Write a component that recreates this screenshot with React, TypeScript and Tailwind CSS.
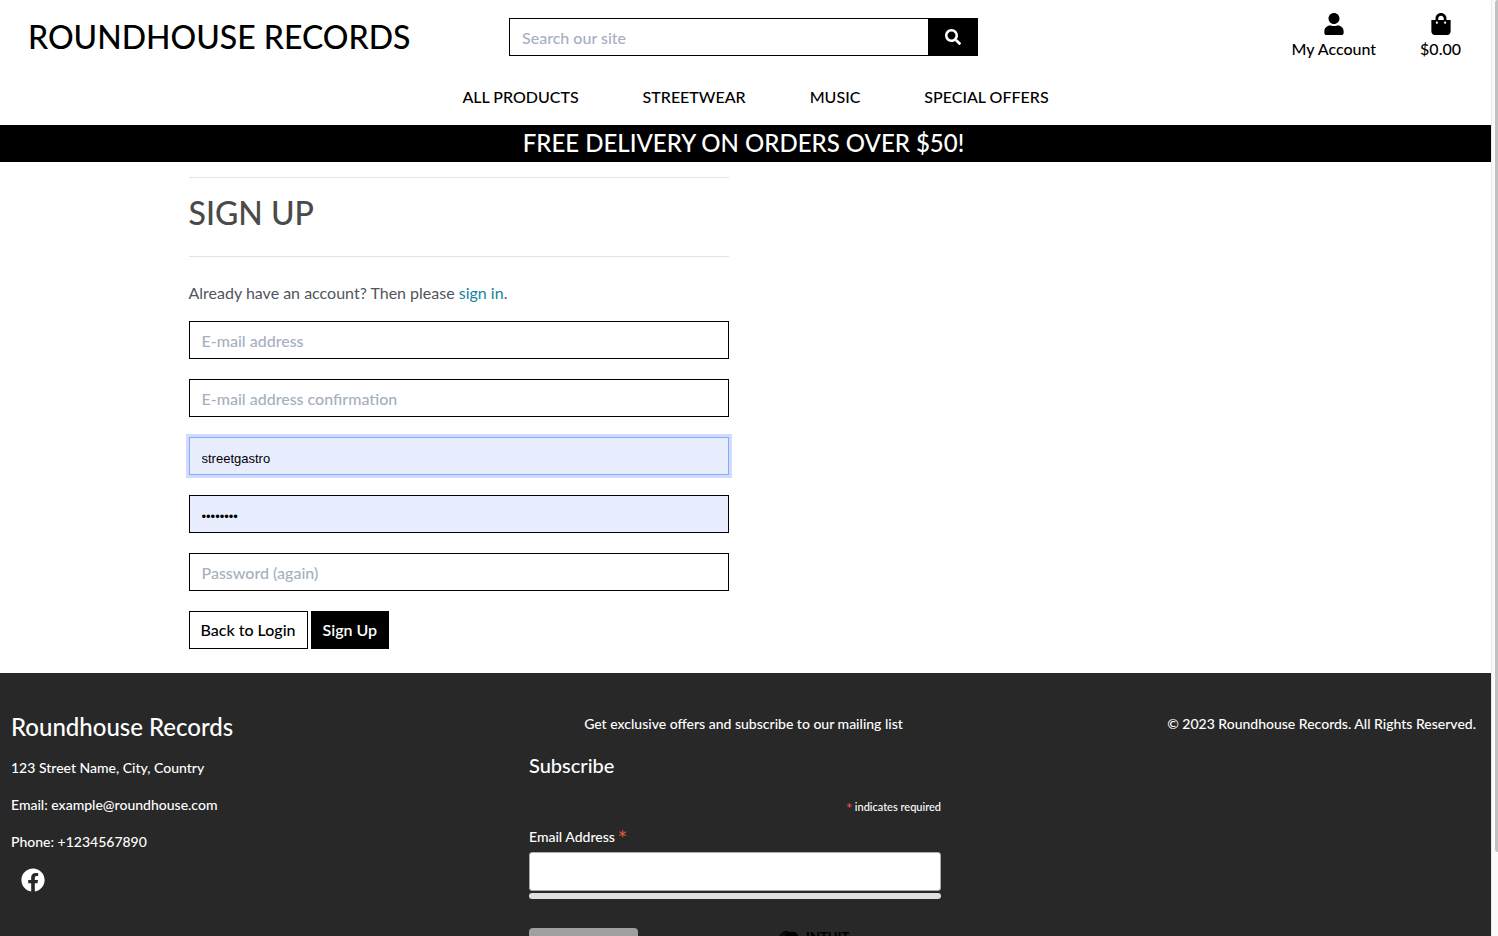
import React from "react";
import { FaFacebook, FaSearch, FaShoppingBag, FaUser } from "react-icons/fa";

const NAV_LINKS = ["ALL PRODUCTS", "STREETWEAR", "MUSIC", "SPECIAL OFFERS"];

const inputBase = "block h-[38px] w-full border px-3 text-base placeholder:text-[#a5b0c0] outline-none";

type FieldProps = {
  id: string;
  label: string;
  type: string;
  value?: string;
  className: string;
};

function Field({ id, label, type, value, className }: FieldProps) {
  return (
    <input
      id={id}
      type={type}
      aria-label={label}
      placeholder={label}
      defaultValue={value}
      className={`${inputBase} ${className}`}
    />
  );
}

function Header() {
  return (
    <header className="text-black">
      <div className="grid h-[75px] grid-cols-3">
        <a href="#home" className="mt-4 pl-7 text-[32px] leading-[42px] whitespace-nowrap">ROUNDHOUSE RECORDS</a>
        <form className="mt-[18px] mr-4 ml-3 flex h-[38px]" onSubmit={(e) => e.preventDefault()}>
          <input
            id="search"
            type="text"
            aria-label="Search our site"
            placeholder="Search our site"
            className="min-w-0 flex-1 border border-black px-3 pt-[2px] text-base outline-none placeholder:text-[#a5b0c0]"
          />
          <button type="submit" aria-label="Search" className="flex w-[49px] items-center bg-black pl-4 text-white">
            <FaSearch size={16} />
          </button>
        </form>
        <div className="flex justify-end gap-11 pt-[13px] pr-[30px]">
          <a href="#account" className="flex flex-col items-center text-base">
            <FaUser size={22} />
            <span className="leading-7">My Account</span>
          </a>
          <a href="#bag" className="flex flex-col items-center text-base">
            <FaShoppingBag size={22} />
            <span className="leading-7">$0.00</span>
          </a>
        </div>
      </div>
      <nav className="flex h-[50px] justify-center gap-16 pt-[10px] pl-5">
        {NAV_LINKS.map((name) => (
          <a key={name} href="#shop" className="text-base leading-6">{name}</a>
        ))}
      </nav>
    </header>
  );
}

function SignUp() {
  return (
    <main className="mx-auto w-full max-w-[1144px] px-[15px] pt-[15px] pb-6">
      <div className="w-[540px] max-w-full">
        <h1 className="h-20 border-y border-[#e4e4e4] pt-[14px] text-[32px] leading-[42px] text-[#4a4a4a]">SIGN UP</h1>
        <p className="mt-6 text-base leading-6 font-normal text-[#4f565d]">
          Already have an account? Then please <a href="#login" className="text-[#17829c]">sign in</a>.
        </p>
        <form className="mt-4 flex flex-col gap-5" onSubmit={(e) => e.preventDefault()}>
          <Field id="email" label="E-mail address" type="email" className="border-black pt-px" />
          <Field id="email2" label="E-mail address confirmation" type="email" className="border-black pt-px" />
          <Field
            id="username"
            label="Username"
            type="text"
            value="streetgastro"
            className="border-[#80acff] bg-[#e8edfd] pt-1 font-[Liberation_Sans] text-[13px] text-black ring-3 ring-[#d2dafd]"
          />
          <Field
            id="password"
            label="Password"
            type="password"
            value="recordss"
            className="border-black bg-[#e8edfd] pt-1 font-[Liberation_Sans] text-[13px] text-black"
          />
          <Field id="password2" label="Password (again)" type="password" className="border-black pt-px" />
          <div className="flex gap-[3px]">
            <a href="#login" className="border border-black px-[11px] leading-9 text-black">Back to Login</a>
            <button type="submit" className="border border-black bg-black px-[11px] leading-9 font-semibold text-white">Sign Up</button>
          </div>
        </form>
      </div>
    </main>
  );
}

function Footer() {
  return (
    <footer className="grid flex-1 grid-cols-3 bg-[#282828] pt-10 text-sm font-medium text-white">
      <div className="pl-[11px]">
        <h2 className="text-2xl leading-[27px]">Roundhouse Records</h2>
        <div className="mt-[17px] flex flex-col gap-4 leading-[21px]">
          <p>123 Street Name, City, Country</p>
          <p>Email: example@roundhouse.com</p>
          <p>Phone: +1234567890</p>
        </div>
        <a href="#facebook" aria-label="Facebook" className="mt-4 ml-[10px] inline-block">
          <FaFacebook size={24} />
        </a>
      </div>
      <div>
        <p className="pr-1 text-center leading-[21px]">Get exclusive offers and subscribe to our mailing list</p>
        <form className="mt-[19px] mr-[53px] ml-8" onSubmit={(e) => e.preventDefault()}>
          <h2 className="text-xl leading-6">Subscribe</h2>
          <p className="mt-5 text-right text-[11px] leading-5">
            <span className="font-[DejaVu_Sans] leading-none text-[#e85c41]">*</span> indicates required
          </p>
          <label htmlFor="subscribe-email" className="mt-[10px] block h-5 leading-5">
            Email Address <span className="font-[DejaVu_Sans] text-base leading-none text-[#e85c41]">*</span>
          </label>
          <input
            id="subscribe-email"
            type="email"
            className="mt-[5px] block h-[39px] w-full rounded-[3px] border border-[#ababab] bg-white px-2 text-black"
          />
          <div className="mt-[2px] h-[6px] rounded-[3px] bg-[#dfdfdf]" />
          <div className="mt-[29px] flex items-start">
            <button type="submit" aria-label="Subscribe" className="h-8 w-[109px] rounded bg-[#a0a0a0]" />
            <a href="#mailchimp" aria-label="Intuit Mailchimp" className="mt-[3px] ml-[138px] flex items-start gap-1 text-black">
              <svg width="26" height="30" viewBox="0 0 26 30" aria-hidden="true">
                <path d="M2 9C4 3 10-1 12 1C7 2 5 6 3 11Z" fill="none" stroke="#000" strokeWidth="1.2" />
                <path d="M8 5C11 0 20-1 22 4V13L18 22L7 18L4 10Z" fill="#000" />
              </svg>
              <span className="text-[13px] leading-3 font-black">INTUIT</span>
            </a>
          </div>
        </form>
      </div>
      <p className="pr-[15px] text-right leading-[21px]">© 2023 Roundhouse Records. All Rights Reserved.</p>
    </footer>
  );
}

export default function App() {
  return (
    <div className="flex h-screen overflow-hidden bg-white font-[Lato,sans-serif] font-medium">
      <div className="flex min-w-0 flex-1 flex-col overflow-hidden">
        <Header />
        <div className="h-[37px] shrink-0 bg-black pr-1 text-center text-2xl leading-9 text-white">
          FREE DELIVERY ON ORDERS OVER $50!
        </div>
        <SignUp />
        <Footer />
      </div>
      <div className="w-[7px] border-l border-[#e8e8e8] bg-[#fafafa] pl-[3px]" aria-hidden="true">
        <div className="h-[91%] rounded-l bg-[#c1c1c1]" />
      </div>
    </div>
  );
}
